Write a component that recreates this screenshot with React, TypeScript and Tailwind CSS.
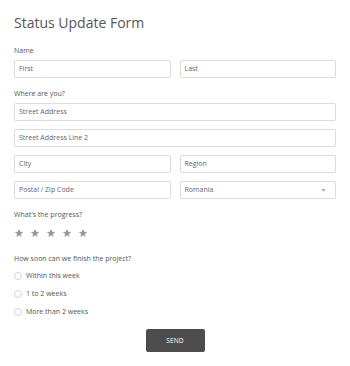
import React from "react";

const font = { fontFamily: '"Open Sans", "Liberation Sans", sans-serif' };

function Field({ placeholder }: { placeholder: string }) {
  return (
    <div className="h-[18px] border border-[#dcdcdc] rounded-[2px] bg-white px-[4px] flex items-center text-[7px] text-[#666]">
      {placeholder}
    </div>
  );
}

function Label({ children, className = "" }: { children: React.ReactNode; className?: string }) {
  return <div className={`h-[10px] leading-[10px] text-[7px] text-[#555] ${className}`}>{children}</div>;
}

function Star() {
  return (
    <svg width="10" height="10" viewBox="0 0 24 24">
      <path
        d="M12 2l2.9 6.9 7.1.6-5.4 4.7 1.7 7.1L12 17.6 5.7 21.3l1.7-7.1L2 9.5l7.1-.6z"
        fill="#9a9a9a"
      />
    </svg>
  );
}

function Radio({ label }: { label: string }) {
  return (
    <div className="h-[10px] flex items-center gap-[4px] text-[7px] text-[#555]">
      <span className="w-[8px] h-[8px] rounded-full border border-[#d4d4d4] bg-white" />
      <span>{label}</span>
    </div>
  );
}

export default function App() {
  return (
    <div className="w-[350px] h-[366px] bg-white px-[14px] pt-[14px]" style={font}>
      <h1 className="h-[18px] leading-[18px] text-[14px] text-[#555] font-normal">Status Update Form</h1>

      <Label className="mt-[14px]">Name</Label>
      <div className="mt-[4px] grid grid-cols-2 gap-[9px]">
        <Field placeholder="First" />
        <Field placeholder="Last" />
      </div>

      <Label className="mt-[11px]">Where are you?</Label>
      <div className="mt-[4px] flex flex-col gap-[8px]">
        <Field placeholder="Street Address" />
        <Field placeholder="Street Address Line 2" />
        <div className="grid grid-cols-2 gap-[9px]">
          <Field placeholder="City" />
          <Field placeholder="Region" />
        </div>
        <div className="grid grid-cols-2 gap-[9px]">
          <Field placeholder="Postal / Zip Code" />
          <div className="h-[18px] border border-[#dcdcdc] rounded-[2px] bg-white px-[4px] flex items-center justify-between text-[7px] text-[#666]">
            <span>Romania</span>
            <svg width="5" height="3" viewBox="0 0 6 4" className="mr-[5px]">
              <path d="M0 0h6L3 3.5z" fill="#aaa" />
            </svg>
          </div>
        </div>
      </div>

      <Label className="mt-[11px]">What's the progress?</Label>
      <div className="mt-[8px] flex gap-[6px]">
        <Star />
        <Star />
        <Star />
        <Star />
        <Star />
      </div>

      <Label className="mt-[16px]">How soon can we finish the project?</Label>
      <div className="mt-[7px] flex flex-col gap-[8px]">
        <Radio label="Within this week" />
        <Radio label="1 to 2 weeks" />
        <Radio label="More than 2 weeks" />
      </div>

      <div className="mt-[12px] flex justify-center">
        <button className="w-[59px] h-[23px] bg-[#4d4d4d] rounded-[2px] text-white text-[6.5px] tracking-[0.2px]">
          SEND
        </button>
      </div>
    </div>
  );
}
